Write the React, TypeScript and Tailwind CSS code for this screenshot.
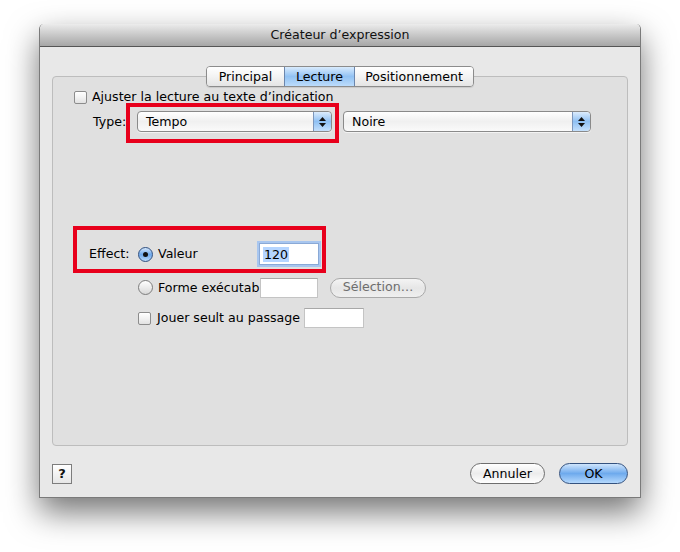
import React from "react";

const font = { fontFamily: '"DejaVu Sans", "Liberation Sans", sans-serif' };

function Checkbox() {
  return (
    <div className="w-[13px] h-[13px] rounded-[2px] border border-[#8c8c8c] bg-gradient-to-b from-[#ffffff] via-[#f2f2f2] to-[#e2e2e2] shadow-[inset_0_1px_0_#fff] shrink-0" />
  );
}

function Radio({ on }: { on?: boolean }) {
  if (on)
    return (
      <div className="w-[15px] h-[15px] rounded-full border border-[#2f4f80] bg-gradient-to-b from-[#d3e6fb] via-[#6ea8ea] to-[#b9dafb] flex items-center justify-center shrink-0">
        <div className="w-[5px] h-[5px] rounded-full bg-[#111]" />
      </div>
    );
  return (
    <div className="w-[15px] h-[15px] rounded-full border border-[#7c7c7c] bg-gradient-to-b from-[#ffffff] via-[#ececec] to-[#d8d8d8] shrink-0" />
  );
}

function Stepper() {
  return (
    <div className="w-[18px] self-stretch border-l border-[#7d96bb] bg-gradient-to-b from-[#dcecfd] via-[#8fc0f3] to-[#c4e0fc] rounded-r-[4px] flex flex-col items-center justify-center gap-[2px]">
      <svg width="7" height="4" viewBox="0 0 7 4"><path d="M3.5 0 L7 4 L0 4 Z" fill="#111" /></svg>
      <svg width="7" height="4" viewBox="0 0 7 4"><path d="M0 0 L7 0 L3.5 4 Z" fill="#111" /></svg>
    </div>
  );
}

function Popup({ label, w }: { label: string; w: string }) {
  return (
    <div className={`${w} h-[21px] rounded-[4px] border border-[#8a8a8a] bg-gradient-to-b from-[#ffffff] via-[#f0f0f0] to-[#fafafa] flex items-stretch shadow-[0_1px_0_rgba(255,255,255,0.6)]`}>
      <div className="flex-1 flex items-center pl-[8px] pt-[1px] text-[12.6px] text-black">{label}</div>
      <Stepper />
    </div>
  );
}

function TextField({ w, children }: { w: string; children?: React.ReactNode }) {
  return (
    <div className={`${w} h-[20px] bg-white border border-[#c4c4c4] border-t-[#a8a8a8] flex items-center`}>{children}</div>
  );
}

export default function App() {
  return (
    <div className="w-[680px] h-[552px] bg-white pl-[39px] pt-[24px]" style={font}>
      <div className="w-[602px] h-[474px] flex flex-col rounded-t-[5px] shadow-[0_14px_32px_rgba(0,0,0,0.55)] border-x border-b border-[#7a7a7a]">
        {/* title bar */}
        <div className="h-[23px] pt-[1px] rounded-t-[5px] bg-gradient-to-b from-[#ececec] via-[#c8c8c8] to-[#a6a6a6] border-b border-[#555] flex items-center justify-center text-[12.6px] text-[#111]">
          Créateur d’expression
        </div>
        {/* body */}
        <div className="flex-1 bg-[#e8e8e8] flex flex-col px-[12px] pt-[19px] pb-[13px]">
          {/* tabs */}
          <div className="relative z-10 flex justify-center">
            <div className="flex h-[21px] rounded-[4px] border border-[#8c8c8c] overflow-hidden text-[12.6px] text-black shadow-[0_1px_1px_rgba(0,0,0,0.1)]">
              <div className="w-[77px] pt-[2px] flex items-center justify-center bg-gradient-to-b from-[#ffffff] via-[#f3f3f3] to-[#e4e4e4]">Principal</div>
              <div className="w-[71px] pt-[2px] flex items-center justify-center border-x border-[#6b86ad] bg-gradient-to-b from-[#d9ebfd] via-[#92c2f3] to-[#bcdcfb]">Lecture</div>
              <div className="w-[118px] pt-[2px] flex items-center justify-center bg-gradient-to-b from-[#ffffff] via-[#f3f3f3] to-[#e4e4e4]">Positionnement</div>
            </div>
          </div>
          {/* tab box */}
          <div className="relative -mt-[11px] h-[370px] rounded-[4px] border border-[#bdbdbd] bg-[#e0e0e0] flex flex-col text-[12.6px] text-black">
            {/* row 1 */}
            <div className="flex items-center gap-[5px] pl-[21px] mt-[13px] h-[15px]">
              <Checkbox />
              <span>Ajuster la lecture au texte d’indication</span>
            </div>
            {/* row 2 */}
            <div className="flex items-center mt-[6px] pl-[40px] h-[21px]">
              <span className="w-[44px] pt-[1px]">Type:</span>
              <Popup label="Tempo" w="w-[195px]" />
              <div className="w-[11px]" />
              <Popup label="Noire" w="w-[248px]" />
            </div>
            {/* effect */}
            <div className="flex items-center mt-[111px] pl-[36px] h-[22px]">
              <span className="w-[49px] pt-[1px]">Effect:</span>
              <Radio on />
              <span className="ml-[5px] w-[101px] pt-[1px]">Valeur</span>
              <div className="w-[60px] h-[22px] bg-white border border-[#8aa9d6] shadow-[0_0_0_2px_#a8c6ef] flex items-center pl-[3px]">
                <span className="bg-[#b5d5ff] px-[1px] leading-[15px]">120</span>
              </div>
            </div>
            <div className="flex items-center mt-[12px] pl-[85px] h-[21px]">
              <Radio />
              <span className="ml-[5px] w-[102px] pt-[1px]">Forme exécutab</span>
              <TextField w="w-[58px]" />
              <div className="ml-[12px] w-[96px] h-[20px] rounded-full border border-[#a9a9a9] bg-gradient-to-b from-[#f4f4f4] via-[#e6e6e6] to-[#efefef] flex items-center justify-center text-[#6e6e6e]">Sélection…</div>
            </div>
            <div className="flex items-center mt-[10px] pl-[85px] h-[20px]">
              <Checkbox />
              <span className="ml-[6px] w-[147px] pt-[1px]">Jouer seult au passage</span>
              <TextField w="w-[60px]" />
            </div>
            {/* red annotation boxes */}
            <div className="absolute left-[73px] top-[26px] w-[213px] h-[40px] border-[4px] border-[#e8001c]" />
            <div className="absolute left-[20px] top-[149px] w-[253px] h-[47px] border-[4px] border-[#e8001c]" />
          </div>
          <div className="flex-1" />
          {/* bottom buttons */}
          <div className="flex items-center">
            <div className="w-[20px] h-[20px] border border-[#7d7d7d] bg-gradient-to-b from-[#ffffff] to-[#e6e6e6] flex items-center justify-center text-[13px] font-bold text-[#111]">?</div>
            <div className="flex-1" />
            <div className="w-[75px] h-[21px] pt-[1px] rounded-full border border-[#6e6e6e] bg-gradient-to-b from-[#ffffff] via-[#ececec] to-[#ffffff] flex items-center justify-center text-[12.6px] text-black">Annuler</div>
            <div className="ml-[14px] w-[69px] h-[21px] pt-[1px] rounded-full border border-[#34527f] bg-gradient-to-b from-[#cfe5fc] via-[#6eaaed] to-[#b4d8fc] flex items-center justify-center text-[12.6px] text-black">OK</div>
          </div>
        </div>
      </div>
    </div>
  );
}
